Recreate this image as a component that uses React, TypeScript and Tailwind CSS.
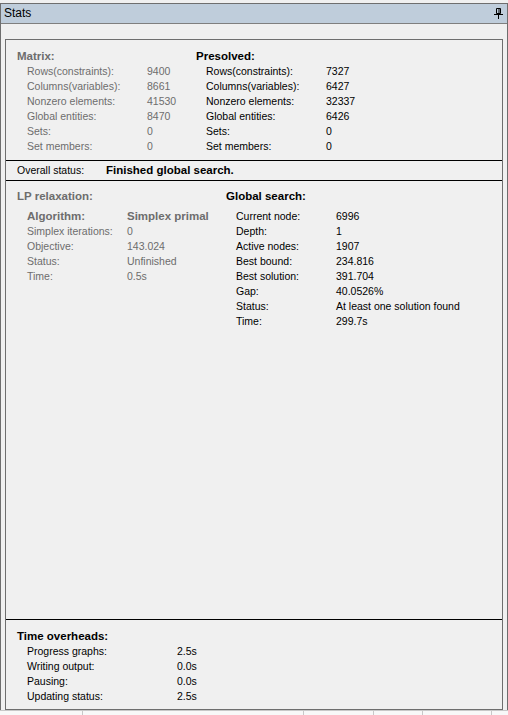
import React from "react";

type Row = [string, string];

const matrix: Row[] = [
  ["Rows(constraints):", "9400"],
  ["Columns(variables):", "8661"],
  ["Nonzero elements:", "41530"],
  ["Global entities:", "8470"],
  ["Sets:", "0"],
  ["Set members:", "0"],
];

const presolved: Row[] = [
  ["Rows(constraints):", "7327"],
  ["Columns(variables):", "6427"],
  ["Nonzero elements:", "32337"],
  ["Global entities:", "6426"],
  ["Sets:", "0"],
  ["Set members:", "0"],
];

const lp: Row[] = [
  ["Simplex iterations:", "0"],
  ["Objective:", "143.024"],
  ["Status:", "Unfinished"],
  ["Time:", "0.5s"],
];

const globalSearch: Row[] = [
  ["Current node:", "6996"],
  ["Depth:", "1"],
  ["Active nodes:", "1907"],
  ["Best bound:", "234.816"],
  ["Best solution:", "391.704"],
  ["Gap:", "40.0526%"],
  ["Status:", "At least one solution found"],
  ["Time:", "299.7s"],
];

const overheads: Row[] = [
  ["Progress graphs:", "2.5s"],
  ["Writing output:", "0.0s"],
  ["Pausing:", "0.0s"],
  ["Updating status:", "2.5s"],
];

function Rows({ rows, labelW, muted }: { rows: Row[]; labelW: string; muted?: boolean }) {
  return (
    <div className={`pl-[10px] ${muted ? "text-[#6d6d6d]" : "text-black"}`}>
      {rows.map(([k, v]) => (
        <div key={k + v} className="flex h-[15px] items-center">
          <span className={`${labelW} shrink-0`}>{k}</span>
          <span>{v}</span>
        </div>
      ))}
    </div>
  );
}

function PinIcon() {
  return (
    <svg width="9" height="11" viewBox="0 0 9 11" className="block">
      <path d="M2.5 0.5h4v5h-4z" fill="none" stroke="#000" />
      <path d="M5 1v4.5" stroke="#000" />
      <path d="M0 6.5h9" stroke="#000" />
      <path d="M4.5 7v4" stroke="#000" />
    </svg>
  );
}

export default function App() {
  return (
    <div
      className="flex h-[715px] w-[508px] flex-col bg-[#f0f0f0] pt-[3px] text-[10.5px] leading-[15px]"
      style={{ fontFamily: '"Liberation Sans", Arial, sans-serif' }}
    >
      <div className="flex min-h-0 flex-1 flex-col border-x border-t border-[#6e6e6e]">
        <div className="flex h-[20px] shrink-0 items-center justify-between border-b border-[#7f7f7f] bg-[#bfcddb] pl-[3px] pr-[4px] text-[12px] text-black">
          <span>Stats</span>
          <PinIcon />
        </div>

        <div className="flex min-h-0 flex-1 flex-col px-[4px] pt-[15px]">
          <div className="flex min-h-0 flex-1 flex-col border border-b-0 border-[#6e6e6e]">
            {/* matrix / presolved */}
            <div className="flex pb-[6px] pl-[11px] pt-[9px]">
              <div className="w-[179px]">
                <div className="h-[15px] text-[11.5px] font-bold text-[#6d6d6d]">Matrix:</div>
                <Rows rows={matrix} labelW="w-[120px]" muted />
              </div>
              <div>
                <div className="h-[15px] text-[11.5px] font-bold">Presolved:</div>
                <Rows rows={presolved} labelW="w-[120px]" />
              </div>
            </div>

            <div className="flex h-[21px] items-center border-y border-black pl-[11px]">
              <span className="w-[89px]">Overall status:</span>
              <span className="text-[11.5px] font-bold">Finished global search.</span>
            </div>

            {/* lp / global search */}
            <div className="flex flex-1 pl-[11px] pt-[8px]">
              <div className="w-[209px]">
                <div className="h-[15px] text-[11.5px] font-bold text-[#6d6d6d]">LP relaxation:</div>
                <div className="mt-[5px] flex h-[15px] items-center pl-[10px] text-[11.5px] font-bold text-[#6d6d6d]">
                  <span className="w-[100px]">Algorithm:</span>
                  <span>Simplex primal</span>
                </div>
                <Rows rows={lp} labelW="w-[100px]" muted />
              </div>
              <div>
                <div className="h-[15px] text-[11.5px] font-bold">Global search:</div>
                <div className="mt-[5px]">
                  <Rows rows={globalSearch} labelW="w-[100px]" />
                </div>
              </div>
            </div>

            {/* time overheads */}
            <div className="border-t border-black pb-[5px] pl-[11px] pt-[9px]">
              <div className="h-[15px] text-[11.5px] font-bold">Time overheads:</div>
              <Rows rows={overheads} labelW="w-[150px]" />
            </div>
          </div>
        </div>
        <div className="mx-[4px] h-px bg-[#6e6e6e]" />
      </div>

      <div className="flex h-[5px] shrink-0 border-t border-[#c8c8c8] bg-[#f8f8f8]">
        <div className="w-[83px] border-r border-[#c8c8c8]" />
        <div className="w-[221px] border-r border-[#c8c8c8]" />
        <div className="w-[70px] border-r border-[#c8c8c8]" />
        <div className="w-[49px] border-r border-[#c8c8c8]" />
        <div className="w-[69px] border-r border-[#c8c8c8]" />
      </div>
    </div>
  );
}
